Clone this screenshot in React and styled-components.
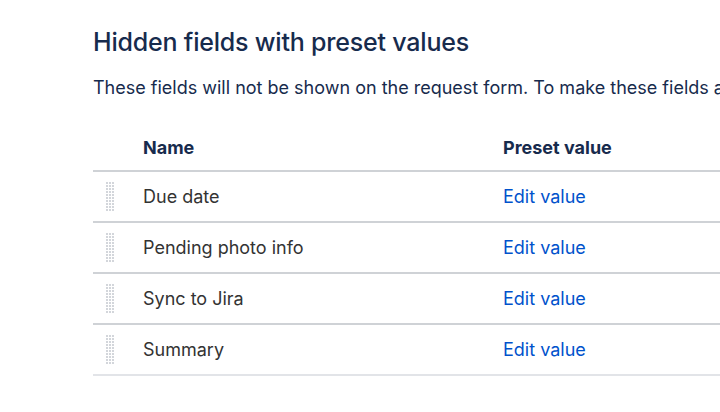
import React from 'react';
import styled, { createGlobalStyle } from 'styled-components';

const GlobalStyle = createGlobalStyle`
	html, body {
		margin: 0;
		padding: 0;
		background: #ffffff;
		overflow: hidden;
	}
	body {
		font-family: Inter, "Noto Sans", "Liberation Sans", sans-serif;
		color: #172b4d;
	}
`;

const fields = ['Due date', 'Pending photo info', 'Sync to Jira', 'Summary'];

const DragHandle = () => (
	<svg width='9' height='30' viewBox='0 0 9 30'>
		{Array.from({ length: 10 }).map((_, r) =>
			[0, 3, 6].map((c) => <rect key={`${r}-${c}`} x={c} y={r * 3} width='2' height='2' fill='#d3d6db' />)
		)}
	</svg>
);

const App = () => {
	return (
		<>
			<GlobalStyle />
			<Page>
				<Title>Hidden fields with preset values</Title>
				<Description>
					These fields will not be shown on the request form. To make these fields appear, drag them into the visible fields list.
				</Description>
				<Table>
					<HeadRow>
						<HandleCell />
						<NameCell $head>Name</NameCell>
						<ValueCell>Preset value</ValueCell>
					</HeadRow>
					{fields.map((field) => (
						<Row key={field}>
							<HandleCell>
								<DragHandle />
							</HandleCell>
							<NameCell>{field}</NameCell>
							<ValueCell>
								<EditLink href='#'>Edit value</EditLink>
							</ValueCell>
						</Row>
					))}
				</Table>
			</Page>
		</>
	);
};

export default App;

const Page = styled.div`
	padding: 26px 0 0 93px;
	width: 627px;
	overflow: hidden;
`;

const Title = styled.h2`
	margin: 0;
	font-size: 25px;
	line-height: 32px;
	font-weight: 500;
	letter-spacing: -0.2px;
	color: #172b4d;
`;

const Description = styled.p`
	margin: 18px 0 0;
	font-size: 18px;
	line-height: 24px;
	white-space: nowrap;
	overflow: hidden;
	color: #172b4d;
`;

const Table = styled.div`
	margin-top: 30px;
	display: flex;
	flex-direction: column;
`;

const HeadRow = styled.div`
	display: grid;
	grid-template-columns: 50px 360px 1fr;
	align-items: center;
	box-sizing: border-box;
	height: 42px;
	padding-bottom: 5px;
	border-bottom: 2px solid #cfd2d6;
	font-size: 18px;
	font-weight: 700;
	color: #172b4d;
`;

const Row = styled.div`
	display: grid;
	grid-template-columns: 50px 360px 1fr;
	align-items: center;
	height: 49px;
	border-bottom: 2px solid #cfd2d6;

	&:last-child {
		border-bottom-color: #e2e4e8;
	}
`;

const HandleCell = styled.div`
	display: flex;
	align-items: center;
	padding-left: 13px;
`;

const NameCell = styled.div`
	font-size: 18px;
	color: ${(p) => (p.$head ? '#172b4d' : '#333333')};
`;

const ValueCell = styled.div`
	font-size: 18px;
`;

const EditLink = styled.a`
	color: #0052cc;
	text-decoration: none;
`;
